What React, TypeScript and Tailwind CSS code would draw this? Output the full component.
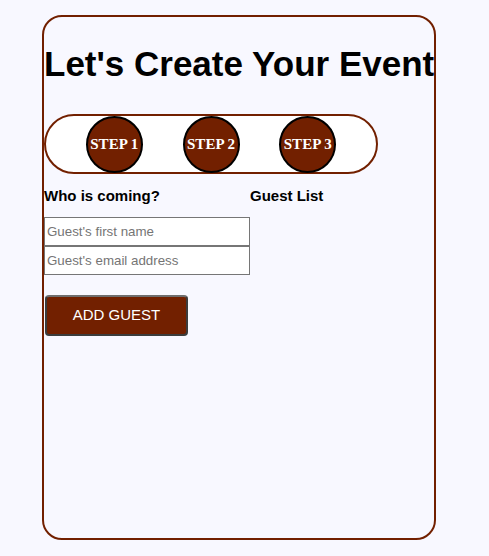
const steps = ["STEP 1", "STEP 2", "STEP 3"];

function StepBar() {
  return (
    <div className="flex h-[60px] w-[334px] items-center justify-evenly rounded-[30px] border-2 border-[#722000] bg-white">
      {steps.map((step) => (
        <div
          key={step}
          className="flex size-[57px] items-center justify-center rounded-full border-2 border-black bg-[#722000] font-['Liberation_Serif',serif] text-[15px] leading-none font-bold text-white"
        >
          {step}
        </div>
      ))}
    </div>
  );
}

export default function App() {
  return (
    <div className="min-h-[556px] bg-[#f8f8ff] pt-[15px] font-['Liberation_Sans',Arial,sans-serif] text-black">
      <div className="ml-[42px] h-[525px] w-[394px] rounded-[20px] border-2 border-[#722000]">
        <h1 className="mt-[30px] text-[35px] leading-[34px] font-bold whitespace-nowrap">
          Let's Create Your Event
        </h1>
        <div className="mt-[33px]">
          <StepBar />
        </div>
        <div className="mt-[14px] grid grid-cols-[206px_1fr]">
          <div>
            <h2 className="text-[15px] leading-none font-bold">Who is coming?</h2>
            <div className="mt-[14px] flex flex-col">
              <input
                type="text"
                placeholder="Guest's first name"
                className="h-[29px] w-[206px] border border-[#767676] bg-white px-[2px] text-[13.33px] placeholder:text-[#757575]"
              />
              <input
                type="email"
                placeholder="Guest's email address"
                className="h-[29px] w-[206px] border border-[#767676] bg-white px-[2px] text-[13.33px] placeholder:text-[#757575]"
              />
            </div>
            <button
              type="button"
              className="mt-[20px] ml-px h-[41px] w-[143px] rounded-[4px] border-2 border-[#3c3c3c] border-t-[#6e6e6e] bg-[#722000] text-[15px] text-white"
            >
              ADD GUEST
            </button>
          </div>
          <div>
            <h2 className="text-[15px] leading-none font-bold">Guest List</h2>
          </div>
        </div>
      </div>
    </div>
  );
}
